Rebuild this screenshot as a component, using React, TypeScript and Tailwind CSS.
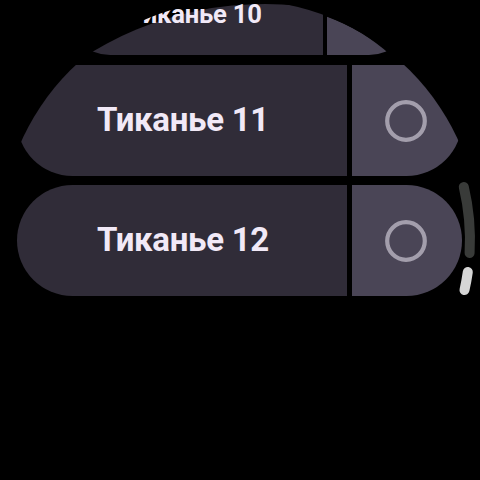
import React from "react";

const font = { fontFamily: "Roboto, 'Noto Sans', sans-serif" };

function RadioRing({ size }: { size: number }) {
  return (
    <svg width={size} height={size} viewBox="0 0 42 42">
      <circle cx="21" cy="21" r="18.8" fill="none" stroke="#a39eac" strokeWidth="4.2" />
    </svg>
  );
}

function FullItem({ label }: { label: string }) {
  return (
    <div className="flex ml-[17px] w-[445px] h-[111px] gap-[5px]">
      <div className="w-[330px] h-full bg-[#302c38] rounded-l-full rounded-r-[7px] flex items-center justify-center">
        <span className="text-[33px] font-bold text-[#f1e9f7] tracking-[-0.3px] leading-none pb-[2px] pl-[2px]">{label}</span>
      </div>
      <div className="w-[110px] h-full bg-[#4a4556] rounded-r-full rounded-l-[7px] flex items-center pl-[33px]">
        <RadioRing size={42} />
      </div>
    </div>
  );
}

export default function App() {
  return (
    <div className="w-[480px] h-[480px] bg-black relative overflow-hidden" style={font}>
      <div className="w-[480px] h-[480px] rounded-full overflow-hidden flex flex-col">
        {/* item 10 (shrinking at top edge) */}
        <div className="flex ml-[67px] w-[345px] h-[86px] gap-[4px] mt-[-31px] shrink-0">
          <div className="relative w-[256px] h-full">
            <div className="absolute inset-0 bg-[#302c38] rounded-l-full rounded-r-[6px] [clip-path:circle(336px_at_198px_371px)]" />
            <div className="relative h-full flex items-center justify-center pt-[5px]">
              <span className="text-[25.6px] font-bold text-[#f1e9f7] tracking-[-0.2px] leading-none [clip-path:inset(0_0_0_12px)]">
                Тиканье 10
              </span>
            </div>
          </div>
          <div className="w-[85px] h-full bg-[#4a4556] rounded-r-full rounded-l-[6px] [clip-path:circle(188px_at_-63px_225px)]" />
        </div>
        <div className="mt-[10px] shrink-0">
          <FullItem label="Тиканье 11" />
        </div>
        <div className="mt-[9px] shrink-0">
          <FullItem label="Тиканье 12" />
        </div>
      </div>
      <svg className="absolute inset-0" width="480" height="480" viewBox="0 0 480 480">
        <path d="M 463.8 187 A 230 230 0 0 1 469.6 253" fill="none" stroke="#393b39" strokeWidth="10" strokeLinecap="round" />
        <path d="M 467.8 272 A 230 230 0 0 1 464.5 290" fill="none" stroke="#d6d6d6" strokeWidth="10" strokeLinecap="round" />
      </svg>
    </div>
  );
}
